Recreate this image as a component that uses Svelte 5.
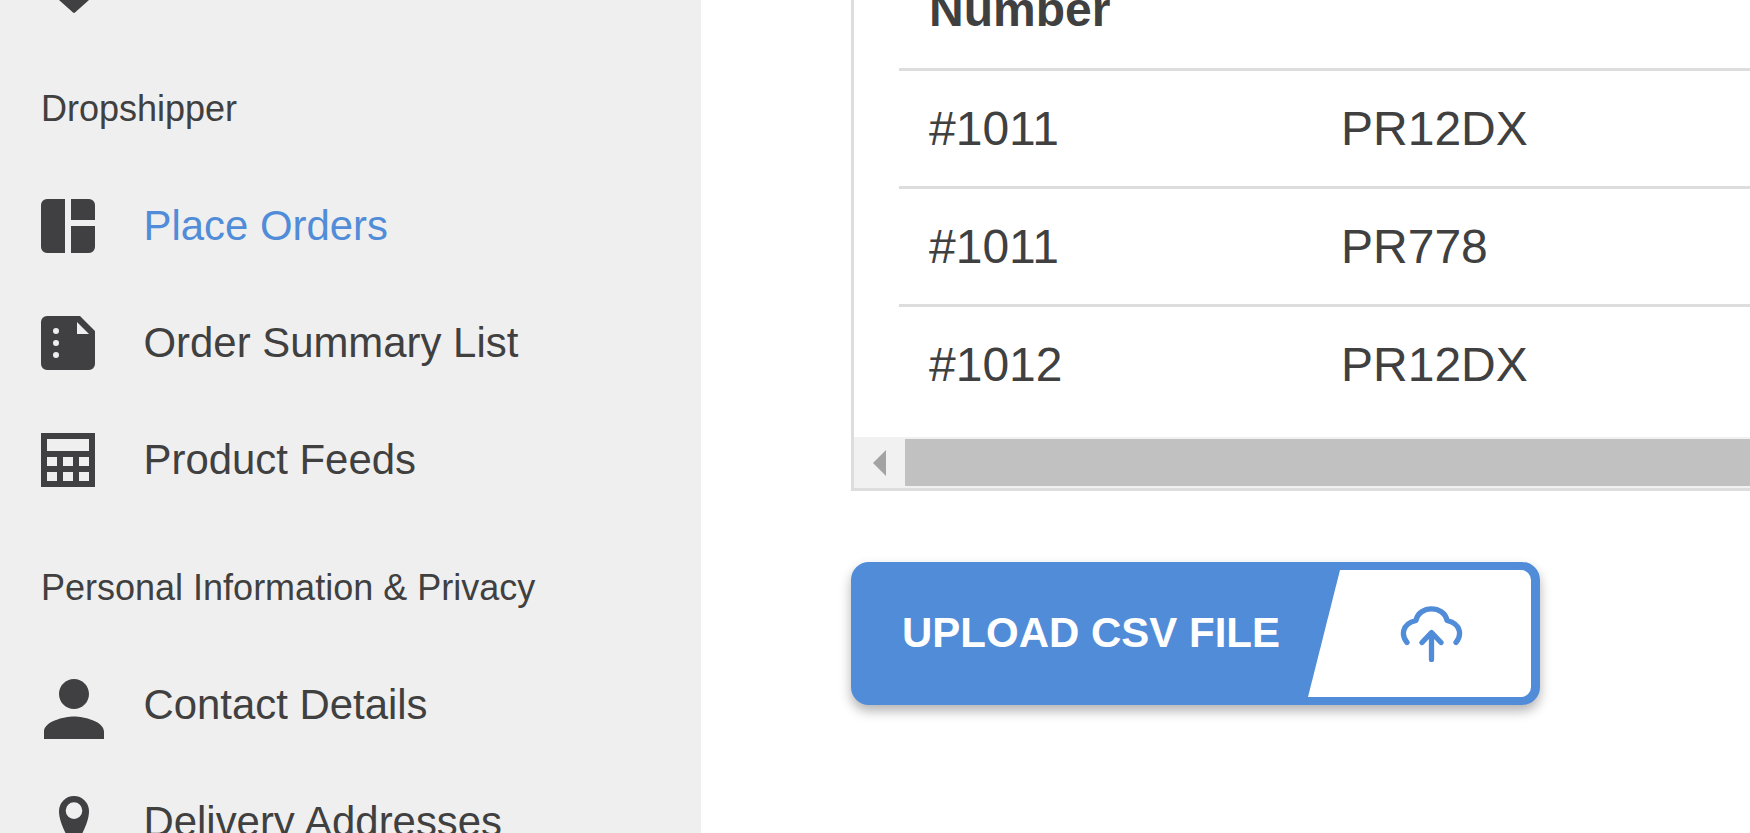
<script>
  const rows = [
    { order: '#1011', sku: 'PR12DX' },
    { order: '#1011', sku: 'PR778' },
    { order: '#1012', sku: 'PR12DX' }
  ];
  const pin = 'M15 0A15 15 0 0 1 30 15C30 22 27 30 23.500 37L15 45 6.500 37C3 30 0 22 0 15A15 15 0 0 1 15 0zM15 6.300a8.300 8.300 0 1 0 0 16.600 8.300 8.300 0 0 0 0-16.600z';
</script>

<div class="page">
  <aside class="sidebar">
    <div class="top-pin">
      <svg width="30" height="13" viewBox="0 0 30 13"><path d="M0 0h30L16 12.500a1.500 1.500 0 0 1-2 0z" /></svg>
    </div>

    <h3 class="section first">Dropshipper</h3>

    <a class="item active">
      <span class="ico">
        <svg width="54" height="54" viewBox="0 0 54 54"><path d="M6 0h18v54H6a6 6 0 0 1-6-6V6a6 6 0 0 1 6-6zM30 0h18a6 6 0 0 1 6 6v15H30zM30 27h24v21a6 6 0 0 1-6 6H30z" /></svg>
      </span>
      <span>Place Orders</span>
    </a>
    <a class="item">
      <span class="ico">
        <svg width="54" height="54" viewBox="0 0 54 54"><path fill-rule="evenodd" d="M6 0h33l15 15v33a6 6 0 0 1-6 6H6a6 6 0 0 1-6-6V6a6 6 0 0 1 6-6zM36 6v12h12zM15 12a3 3 0 1 0 0 6 3 3 0 0 0 0-6zm0 12a3 3 0 1 0 0 6 3 3 0 0 0 0-6zm0 12a3 3 0 1 0 0 6 3 3 0 0 0 0-6z" /></svg>
      </span>
      <span>Order Summary List</span>
    </a>
    <a class="item">
      <span class="ico">
        <svg width="54" height="54" viewBox="0 0 54 54"><path fill-rule="evenodd" d="M0 0h54v54H0zM6 6v12h42V6zM6 24v9h10v-9zM22 24v9h10v-9zM38 24v9h10v-9zM6 39v9h10v-9zM22 39v9h10v-9zM38 39v9h10v-9z" /></svg>
      </span>
      <span>Product Feeds</span>
    </a>

    <h3 class="section second">Personal Information &amp; Privacy</h3>

    <a class="item">
      <span class="ico person">
        <svg width="60" height="60" viewBox="0 0 16 16"><path d="M8 8c2.210 0 4-1.790 4-4S10.210 0 8 0 4 1.790 4 4s1.790 4 4 4zm0 2c-2.670 0-8 1.340-8 4v2h16v-2c0-2.660-5.330-4-8-4z" /></svg>
      </span>
      <span>Contact Details</span>
    </a>
    <a class="item">
      <span class="ico pin">
        <svg width="30" height="45" viewBox="0 0 30 45"><path fill-rule="evenodd" d={pin} /></svg>
      </span>
      <span>Delivery Addresses</span>
    </a>
  </aside>

  <main class="main">
    <div class="table-box">
      <div class="row head">
        <div class="cell">Number</div>
      </div>
      {#each rows as row, i}
        <div class="row" class:last={i === rows.length - 1}>
          <div class="cell">{row.order}</div>
          <div class="cell">{row.sku}</div>
        </div>
      {/each}
      <div class="scrollbar">
        <div class="scroll-btn"><span class="arrow"></span></div>
        <div class="thumb"></div>
      </div>
    </div>

    <button class="upload" type="button">
      <span class="upload-label">UPLOAD CSV FILE</span>
      <span class="upload-pane">
        <svg width="64" height="57" viewBox="0 0 64 57" fill="none" stroke="currentColor" stroke-width="5.300" stroke-linecap="round" stroke-linejoin="round">
          <path d="M7 37.500C1.500 31 1 19 16 15.500 19 0 44 0 47 15.500 62 19 61.500 31 56 37.500" />
          <path d="M31.500 54.500V28M22 37.500l9.500-10 9.500 10" />
        </svg>
      </span>
    </button>
  </main>
</div>

<style>
  :global(body) {
    margin: 0;
    background: #fff;
    font-family: "Liberation Sans", Arial, sans-serif;
    color: #404040;
  }

  .page {
    display: flex;
    width: 1750px;
    height: 833px;
    overflow: hidden;
  }

  .sidebar {
    flex: 0 0 701px;
    box-sizing: border-box;
    height: 833px;
    padding-left: 41px;
    background: #efefef;
    overflow: hidden;
  }

  .top-pin {
    height: 13px;
    padding-left: 18px;
    display: flex;
    align-items: flex-end;
  }

  svg {
    display: block;
    flex: none;
    fill: #404042;
  }

  .section {
    margin: 0;
    font-size: 36px;
    font-weight: 400;
    line-height: 42px;
  }

  .section.first {
    margin-top: 75px;
    margin-bottom: 69px;
  }

  .section.second {
    margin-top: 49px;
    margin-bottom: 69px;
  }

  .item {
    display: flex;
    align-items: center;
    height: 117px;
    margin-top: -32px;
    margin-bottom: 32px;
    font-size: 41.900px;
    color: #404040;
  }

  .item.active {
    color: #518cd8;
  }

  .ico {
    flex: 0 0 102.500px;
    display: flex;
  }

  .ico.person {
    padding-left: 3px;
    padding-top: 9px;
    box-sizing: border-box;
  }

  .ico.pin {
    padding-left: 18px;
    padding-bottom: 6px;
    box-sizing: border-box;
  }

  .main {
    flex: 1 1 auto;
    min-width: 0;
    padding-left: 150px;
    overflow: hidden;
  }

  .table-box {
    width: 1400px;
    border: 3px solid #ddd;
    border-top: 0;
    font-size: 48px;
  }

  .row {
    display: flex;
    align-items: center;
    box-sizing: border-box;
    height: 118px;
    margin-left: 45px;
    padding-left: 30px;
    border-top: 3px solid #ddd;
  }

  .row.head {
    height: 68px;
    border-top: 0;
    align-items: flex-end;
    padding-bottom: 34px;
    font-weight: 700;
    line-height: 1;
  }

  .row.last {
    height: 133px;
    padding-bottom: 15px;
  }

  .cell:first-child {
    flex: 0 0 412px;
  }

  .scrollbar {
    display: flex;
    height: 51px;
    background: #f1f1f1;
  }

  .scroll-btn {
    flex: 0 0 51px;
    display: flex;
    align-items: center;
    padding-left: 19px;
    box-sizing: border-box;
  }

  .arrow {
    width: 0;
    height: 0;
    border-style: solid;
    border-width: 13px 13px 13px 0;
    border-color: transparent #a3a3a3 transparent transparent;
  }

  .thumb {
    flex: 1 1 auto;
    margin: 2px 0;
    background: #c1c1c1;
  }

  .upload {
    display: flex;
    align-items: stretch;
    width: 689px;
    height: 143px;
    box-sizing: border-box;
    margin-top: 71px;
    padding: 0;
    border: 8px solid #518cd8;
    border-radius: 18px;
    background: #518cd8;
    box-shadow: 0 6px 12px rgba(0, 0, 0, 0.3);
    font-family: inherit;
    color: #fff;
    overflow: visible;
  }

  .upload-label {
    flex: 0 0 448px;
    box-sizing: border-box;
    padding-left: 43px;
    padding-bottom: 2px;
    align-self: center;
    text-align: left;
    font-size: 42px;
    font-weight: 700;
    white-space: nowrap;
  }

  .upload-pane {
    flex: 0 0 224px;
    display: flex;
    align-items: center;
    justify-content: flex-start;
    padding-left: 93px;
    box-sizing: border-box;
    background: #fff;
    color: #518cd8;
    border-radius: 0 10px 10px 0;
    clip-path: polygon(33px 0, 100% 0, 100% 100%, 1px 100%);
  }

  .upload-pane svg {
    fill: none;
  }
</style>
